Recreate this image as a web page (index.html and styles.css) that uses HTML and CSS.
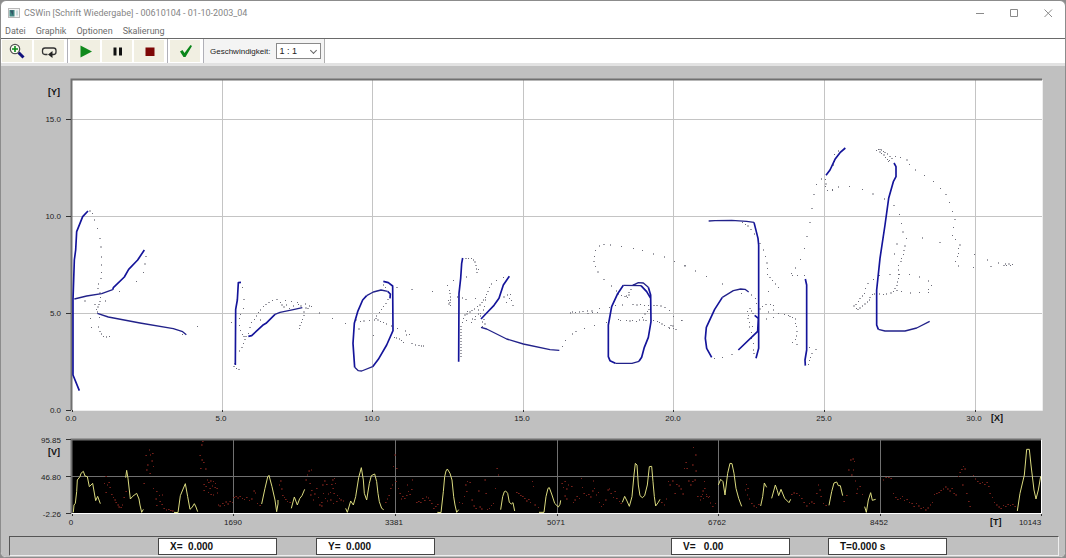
FILE: index.html
```html
<!DOCTYPE html>
<html lang="de">
<head>
<meta charset="utf-8">
<title>CSWin [Schrift Wiedergabe]</title>
<link rel="stylesheet" href="styles.css">
</head>
<body>
<div class="window">
  <header class="titlebar">
    <svg class="app-icon" viewBox="0 0 12 10" aria-hidden="true"><rect x=".5" y=".5" width="11" height="9" fill="#f4f4f4" stroke="#b9b9b9"/><rect x="1.500" y="2" width="5" height="6.500" fill="#3f8580"/><path d="M2 2.500h3v5z" fill="#356"/><rect x="8" y="2.500" width="2" height="5" fill="#c8dcdc"/></svg>
    <h1 class="title">CSWin [Schrift Wiedergabe] - 00610104 - 01-10-2003_04</h1>
    <div class="caption-buttons">
      <button class="caption-button" aria-label="Minimieren"><svg viewBox="0 0 10 10"><path d="M1 5.500h8"/></svg></button>
      <button class="caption-button" aria-label="Maximieren"><svg viewBox="0 0 10 10"><path d="M1.500 1.500h7v7h-7z"/></svg></button>
      <button class="caption-button" aria-label="Schließen"><svg viewBox="0 0 10 10"><path d="M1.500 1.500l7.500 7.500M9 1.500L1.500 9"/></svg></button>
    </div>
  </header>
  <nav class="menu">
    <button class="menu-item">Datei</button>
    <button class="menu-item">Graphik</button>
    <button class="menu-item">Optionen</button>
    <button class="menu-item">Skalierung</button>
  </nav>
  <div class="toolbar">
    <div class="tool-group">
      <button class="tool" aria-label="Vergrößern"><svg viewBox="0 0 16 16"><path d="M9.500 9.500l5 5" stroke="#10107c" stroke-width="3"/><circle cx="6" cy="6" r="4.700" fill="#fbfbf0" stroke="#555" stroke-width="1.200"/><path d="M6 3v6M3 6h6" stroke="#0b8a1a" stroke-width="1.600"/></svg></button>
      <button class="tool" aria-label="Wiederholen"><svg viewBox="0 0 16 16"><path d="M6.500 11.500H4Q1.500 11.500 1.500 9V7.500Q1.500 5 4 5h8.500Q15 5 15 7.500V9q0 2.500-2.500 2.500H9" fill="none" stroke="#333" stroke-width="1.300"/><path d="M11.500 8v7L7 11.500z" fill="#222"/></svg></button>
    </div>
    <div class="tool-group">
      <button class="tool" aria-label="Abspielen"><svg viewBox="0 0 16 16"><path d="M3.500 2.500v12L15 8.500z" fill="#108a1c"/></svg></button>
      <button class="tool" aria-label="Pause"><svg viewBox="0 0 16 16"><path d="M4.500 4.500h3v8h-3zM10 4.500h3v8h-3z" fill="#111"/></svg></button>
      <button class="tool" aria-label="Stopp"><svg viewBox="0 0 16 16"><path d="M4.500 4.500h9v8.500h-9z" fill="#7d0606"/></svg></button>
    </div>
    <div class="tool-group">
      <button class="tool" aria-label="Übernehmen"><svg viewBox="0 0 16 16"><path d="M3 8.500l2.500-1.500 2 3L13.500 2l1.500 1L8.500 14H6.500z" fill="#0a861a"/></svg></button>
    </div>
    <div class="speed">
      <label for="speed">Geschwindigkeit:</label>
      <span class="select-box"><select id="speed"><option>1 : 1</option></select></span>
    </div>
  </div>
  <main class="workspace">
    <svg class="chart" viewBox="1 66 1064 364" role="img" aria-label="Schriftverlauf Y über X">
      <defs>
        <marker id="dot" markerUnits="userSpaceOnUse" markerWidth="4" markerHeight="4" refX="2" refY="2"><rect width="4" height="4" fill="#6c6c78"/></marker>
      </defs>
      <rect x="72" y="80" width="970" height="330" fill="#fff"/>
      <path class="grid-light" d="M222.500 80v330M372.500 80v330M523.500 80v330M673.500 80v330M824.500 80v330M975.500 80v330M72 119.500h970M72 216.500h970M72 313.500h970"/>
      <path class="edge" d="M71.500 410V79.500H1042"/>
      <path d="M1042.500 80v330.500H72" fill="none" stroke="#eee"/>
      <path class="tick" d="M66 119.500h5M66 216.500h5M66 313.500h5M66 410.500h5M72.500 410v2M222.500 410v2M372.500 410v2M523.500 410v2M673.500 410v2M824.500 410v2M975.500 410v2"/>
      <g class="axis end"><text x="61" y="122">15.0</text><text x="61" y="219">10.0</text><text x="61" y="316">5.0</text><text x="61" y="413">0.0</text></g>
      <g class="axis mid"><text x="71" y="421">0.0</text><text x="221" y="421">5.0</text><text x="372" y="421">10.0</text><text x="522" y="421">15.0</text><text x="673" y="421">20.0</text><text x="824" y="421">25.0</text><text x="974" y="421">30.0</text></g>
      <g class="axis-name"><text x="48" y="95">[Y]</text><text x="991" y="421">[X]</text></g>

      <g transform="translate(40 190) scale(.33333)">
        <polyline class="air" points="150,63 157,70 164,90 172,115 180,145 183,171 185,201 185,225 185,247 183,265 175,282 174,296 180,309 182,322 180,335 177,343 174,351 170,358 172,366 178,382 151,385 155,412 175,411 180,424 185,432 191,439 199,441 208,440 165,343 197,333 135,333 238,304 290,275 310,248 315,222 318,200 473,409 428,434"/>
        <path class="pen" d="M144 63L128 80 110 125 107 180 103 210 99 330 99 555 118 602M218 299l2-6 33-32 13-23 27-28 20-30"/>
        <path class="pen thin" d="M103 327l37-9 45-7 33-12M172 370l33 11 95 18 100 17 28 9 11 9"/>
      </g>
      <g transform="translate(220 240) scale(.33333)">
        <polyline class="air" points="68,142 72,178 70,205 62,224 58,235 34,248 59,256 62,271 67,283 78,290 85,280 90,262 95,248 103,238 110,228 115,218 122,240 122,210 130,200 138,193 147,187 158,181 171,179 182,187 186,195 192,201 196,182 200,195 208,206 214,184 220,198 232,188 236,194 243,198 256,192 258,204 268,198 275,200 264,206 220,208 252,216 252,226 248,238 245,248 240,256 239,265 298,219 337,236 377,251 72,290 75,299 70,311 66,322 58,333 45,370 42,380 50,386 57,389"/>
        <polyline class="air" points="531,142 576,148 638,154 490,135 496,143 504,179 498,190 490,199 484,209 478,218 470,228 468,236 474,240 482,245 491,248 500,252 514,258 532,265 556,273 568,283 560,285 524,292 530,294 538,297 545,302 551,308 576,311 586,315 597,316 605,318 610,318 417,267 461,286 408,240 422,244 432,243 448,242 463,240"/>
        <path class="pen" d="M63 127l-8 1-3 52-5 28-1 167M85 289l10-2 33-31 10-6 27-27M490 124l15 4 13 10 1 134-19 43-25 43-17 22M404 382l-5-72 4-60 10-35 15-35 12-13M503 154l8 8-1 13"/>
        <path class="pen thin" d="M165 223l15-6 40-8 27-6M458 380l-33 13-10-1-11-10M440 167l20-11 23-6 20 4"/>
      </g>
      <g transform="translate(430 240) scale(.33333)">
        <polyline class="air" points="8,154 108,55 115,55 124,56 130,60 135,66 138,76 140,87 146,89 141,98 110,111 71,122 53,136 58,152 60,161 62,171 56,181 62,180 60,188 61,197 57,192 82,171 98,174 108,178 136,176 220,112 199,121 185,132 178,143 174,155 170,163 167,172 160,180 166,180 156,188 150,195 142,200 134,207 126,212 120,216 112,215 105,225 111,222 163,200 160,210 152,220 100,235 98,247 110,241 125,248 135,239 128,237 136,230 145,222 152,228 93,260 93,269 93,278 93,287 93,296 93,305 93,314 93,323 93,332 93,341 93,350 162,238 158,246 165,252 158,260 222,171 229,188 233,165 242,163 239,175 245,182 249,197 145,210"/>
        <polyline class="air" points="765,78 733,65 704,51 671,42 638,32 610,26 574,19 542,15 522,13 509,18 497,32 494,50 492,65 497,80 504,96 522,119 544,138 559,153 566,162 574,167 585,170 592,173 597,165 590,168 597,157 603,148 422,219 428,216 436,218 448,216 459,215 472,213 486,213 474,220 487,218 503,218 508,206 538,203 557,197 578,195 609,194 621,195 632,194 643,196 655,196 672,196 681,197 693,198 705,202 718,212 731,229 756,242 565,238 572,242 590,241 600,243 608,242 619,244 629,240 638,232 645,222 652,214 657,208 640,240 648,242 671,241 683,245 689,248 696,252 703,256 717,262 723,257 729,258 731,266 738,268 719,266 397,320 407,302 427,282 438,275 463,265 493,256 529,248"/>
        <path class="pen" d="M98 54l-3 16-3 45-5 45-1 205M153 237l17-18 22-23 15-21 13-40 18-26M655 142l7 23 1 80-8 47-12 30-8 30-8 12M556 370l-16-8-5-12V255l10-55 17-37 18-27M633 137l17 18 12 20"/>
        <path class="pen thin" d="M153 262l17 5 60 30 50 15 80 17 28 2M608 136l17-8 15 1 15 13M627 364l-21 6h-50M580 136l53 1"/>
      </g>
      <g transform="translate(680 130) scale(.33333)">
        <polyline class="air" points="15,407 46,423 80,440 127,462 5,572 188,277 196,283 204,288 213,298 223,312 240,340 251,360 256,379 261,399 262,415 263,433 270,443 278,452 286,462 296,472 265,484 185,490 214,495 227,506 230,520 258,523 271,524 280,526 248,530 240,537 280,540 265,546 296,550 313,553 325,556 330,559 337,562 346,567 346,580 349,590 351,604 350,618 347,628 351,644 337,638 259,567 280,562 210,535 203,545 205,556 214,543 219,551 204,566 208,578 209,591 217,590 215,608 214,625 220,640 220,660 222,670 104,686 127,682 156,673 408,659 396,670 388,652 392,682 388,692 385,703 334,431 337,437 352,437 374,437 346,414 362,388 373,356 381,320 390,277 396,235 402,194 410,164 424,147 436,148 438,162 436,170 442,181 457,182 475,63 463,74 463,95 460,105"/>
        <path class="pen" d="M222 277l12 48 2 20v310l-8 30M127 502l-23 36-25 54-3 33 4 30 15 27M175 660l58-56 2-39-11-9M376 447l4 18v195l-5 30 1 17M496 54l-16 14-15 20-15 32-12 16"/>
        <path class="pen thin" d="M86 273l19-1 50-1 45 3 22 3M206 486l-11-8-13-1-22 5-33 20"/>
      </g>
      <g transform="translate(830 130) scale(.33333)">
        <polyline class="air" points="140,62 146,59 150,58 155,60 160,64 155,70 150,66 162,75 167,82 172,88 175,95 165,67 172,72 180,79 186,86 178,92 197,79 212,83 231,90 239,103 257,120 284,137 311,155 331,176 348,194 358,217 367,244 375,268 370,293 367,316 376,328 390,345 385,356 385,370 382,380 376,394 385,408 431,412 433,374 473,390 483,410 505,399 522,407 527,402 530,406 537,402 541,406 547,403 278,324 330,338"/>
        <polyline class="air" points="8,178 26,171 59,169 97,178 129,192 163,207 192,227 208,254 214,280 219,306 230,325 225,348 222,362 221,374 215,386 213,395 201,342 194,372 205,407 206,420 205,434 206,446 202,456 201,466 195,476 201,482 190,484 183,489 170,492 160,493 148,492 134,492 127,493 120,502 118,510 112,516 105,522 98,528 90,534 84,539 79,536 72,528 78,524 85,515 90,506 98,498 103,490 107,475 114,461 131,448 148,437 180,434 208,434 239,434 268,441 295,453 304,466 295,479 296,487 268,487 241,489 214,485"/>
        <path class="pen" d="M192 99l6 11v30l-8 15-14 50-11 80-15 100-10 95v105l5 13"/>
        <path class="pen thin" d="M145 598l20 5h60l35-9 39-20"/>
      </g>
    </svg>
    <svg class="chart" viewBox="1 430 1064 106" role="img" aria-label="Geschwindigkeit V über Zeit T">
      <defs>
        <marker id="red" markerUnits="userSpaceOnUse" markerWidth="5" markerHeight="4" refX="2" refY="2"><rect width="5" height="4" fill="#74201a"/></marker>
      </defs>
      <rect x="72" y="440" width="969" height="73"/>
      <path class="grid-dark" d="M233.500 440v73M395.500 440v73M557.500 440v73M718.500 440v73M880.500 440v73M72 476.500h969"/>
      <path class="edge" d="M71.500 513V439.500H1041"/>
      <path d="M1041.500 440v73.500H72" fill="none" stroke="#fff"/>
      <path class="tick" d="M66 439.500h5M66 476.500h5M66 513.500h5M72.500 514v2M233.500 514v2M395.500 514v2M557.500 514v2M718.500 514v2M880.500 514v2M1041.500 514v2"/>
      <g class="axis end"><text x="61" y="443">95.85</text><text x="61" y="480">46.80</text><text x="61" y="517">-2.26</text></g>
      <g class="axis mid"><text x="71" y="525">0</text><text x="233" y="525">1690</text><text x="394" y="525">3381</text><text x="556" y="525">5071</text><text x="717" y="525">6762</text><text x="879" y="525">8452</text><text x="1030" y="525">10143</text></g>
      <g class="axis-name"><text x="48" y="455">[V]</text><text x="990" y="525">[T]</text></g>

      <g transform="translate(0 425) scale(.33333)">
        <polyline class="pause" points="318,155 313,175 322,180 327,172 318,202 330,188 335,208 340,218 345,225 348,233 354,240 357,246 363,247 367,240 372,217 378,200 438,92 443,120 448,75 451,90 458,85 456,108 460,125 440,135 450,145 432,175 460,190 470,200 478,212 468,222 487,210 480,230 470,242 486,238 492,250 499,255 506,253 512,256 518,258 600,92 605,60 608,50 606,105 611,112 617,132 602,130 622,165 618,184 612,178 626,173 632,168 640,170 646,176 630,190 637,183 645,187 651,190 625,202 633,208 640,210 652,204 612,196 655,240 660,243 668,236 673,241 678,231 684,237 690,229 697,233 702,217 708,215 714,219 720,215 727,221 733,224 740,218 748,226 755,222 762,198 766,204 772,235 780,242"/>
        <polyline class="pause" points="842,168 838,180 845,192 848,212 853,218 857,224 862,230 870,233 918,165 922,150 927,138 934,135 930,175 935,197 932,210 940,225 944,207 950,190 955,218 959,240 965,232 968,180 974,168 980,178 985,207 976,220 982,228 992,225 998,165 1003,160 1006,176 999,190 991,202 1002,206 1012,212 1018,220 1010,230 1023,225 1030,228 965,243 1000,235 970,205 995,178"/>
        <path class="speed-line" d="M220 262l2-22 4-5 4-35 2-35 8-10 3-10 7-6 5 14 7 2 6 30 10-10 9 52 6-13 8 22M377 158l3-22 4 24 7 62 7-8 12-9 7 17 3 18 5 22 5-9M522 262l12 1 7-51 7-17 8-19 7 39 7 38 7-7 6-10 5 10 5 14M785 237l10-47 8-34 4-5 9 34 9 40 5 35 4-23v-12M874 250l9-34 9 24 7-19 7-9 8-19"/>
      </g>
      <g transform="translate(350 425) scale(.33333)">
        <polyline class="pause" points="107,233 112,222 117,212 122,190 127,180 130,125 135,90 140,130 138,170 145,190 154,222 158,214 164,220 170,211 175,200 180,208 185,194 172,180 187,165 150,205 200,233 206,229 212,232 218,220 224,226 229,216 235,219 239,226 245,236 251,250 257,245 263,238 328,232 337,236 343,215 347,180 352,170 360,172 350,200 366,225 372,243 378,250 386,198 390,246 395,252 405,165 408,205 412,254 418,250 424,242 430,235 441,130 445,150 436,190 500,202 506,205 512,211 518,214 524,221 530,228 536,224 541,233 547,170 550,185 555,240 565,248"/>
        <polyline class="pause" points="636,175 640,188 645,170 650,192 655,180 645,213 650,222 665,185 670,232 675,225 681,215 688,220 694,160 697,188 702,205 709,212 716,208 722,216 728,198 733,190 739,210 730,168 745,202 748,232 754,245 760,238 767,225 774,195 778,192 783,205 790,218 795,200 800,220 808,230 813,236 935,232 943,240 949,222 955,170 960,180 968,168 975,205 980,178 987,183 993,192 999,207 1003,130 1008,112 1011,130 1016,168 1022,180 1028,170 1035,165 1030,68 1037,90 1028,120 1038,138 1043,215 1051,225 1057,208 1063,170 1060,220 1070,214 1078,215"/>
        <path class="speed-line" d="M-13 250l5 12 10-34 8 12 7-25 9-57 8-30 6 37 3 40 7 20 8-50 6-23 10-5 6 23 4 35 4 25 7 20 6 4M262 262l11 1 7-63 4-45 4-17 4-6 8 13 6 20 5 50 4 25 5 22 6-8M452 254l6-39 5-15 4-2 6 7 5 27 6 5 5-4 5 25M567 262h15l6-47 6-25 4-2 8 22 8 25 11 11 5-8 2-12M817 232l7-18 7 14 7 16 8-29 6-65 4-35 5 5 4 60 5 32 7 6 7-6 8-32 6-55 7-1 4 46 4 45 4 28 8-11 5-9"/>
      </g>
      <g transform="translate(700 425) scale(.33333)">
        <polyline class="pause" points="3,215 9,198 14,190 19,208 25,218 31,234 38,245 46,236 139,178 136,195 144,190 142,210 148,222 155,235 162,243 169,248 176,238 275,208 282,204 290,206 298,212 305,220 312,232 320,243 328,235 335,231 342,235 350,205 355,180 360,195 363,215 370,235 378,242 432,230 440,212 446,135 452,105 459,102 463,110 455,150 460,135 466,168 472,192 480,185 487,208 470,205 550,165 558,158 566,157 573,160 580,205 587,218 593,224 601,220 607,215 613,226 621,224 628,232 636,236 642,245 649,235 656,243 663,250 670,247 677,255 684,249 691,240 697,232 703,209 710,206 717,203 723,197 730,192 737,186 743,192 750,198 756,190 762,205 768,210 775,155 780,142 785,133 790,125 795,132 788,180 800,205 806,230 810,245 820,152 826,162 833,170 840,176 847,172 854,178 861,172 866,185 870,205 877,218 883,232 890,240 897,246 903,250 910,241 917,245 924,239 931,242 938,238 945,244"/>
        <path class="speed-line" d="M55 180l7-17 7 7 6 40 8-65 7-30 6 1 6 29 6 45 8 30 9 24M182 243l6-28 5-41 7 13M215 220l11-40 6 17 4 15 7-19 11 27 13 13 5-10M387 241l8-41 7-26 8-3 5 11h6l7 30M494 245l5 17 6-37 7-22 5 23 10-3M952 258l8-53 13-55 7-77h8l5 47 9 75 6 27 7-27 7-41"/>
      </g>
    </svg>
    <footer class="status">
      <output class="field field-x">X=&nbsp; 0.000</output>
      <output class="field field-y">Y=&nbsp; 0.000</output>
      <output class="field field-v">V=&nbsp;&nbsp; 0.00</output>
      <output class="field field-t">T=0.000 s</output>
    </footer>
  </main>
</div>
</body>
</html>
```
FILE: styles.css
```css
* { box-sizing: border-box; }

body {
  margin: 0;
  background: #8c8c8c;
  font-family: "Liberation Sans", Arial, sans-serif;
}

button {
  padding: 0;
  border: 0;
  background: none;
  font: inherit;
  color: inherit;
}

.window {
  display: flex;
  flex-direction: column;
  min-height: 100vh;
  overflow: hidden;
  border: 1px solid #8c8c8c;
  border-radius: 6px;
  background: #fff;
}

.titlebar {
  display: flex;
  align-items: center;
  height: 23px;
  padding: 0 7px;
  gap: 4px;
  color: #858585;
}

.app-icon { width: 12px; height: 10px; }

.title {
  flex: 1;
  margin: 0;
  font: 9px/12px Roboto, "Noto Sans", sans-serif;
}

.caption-buttons { display: flex; gap: 14px; }

.caption-button {
  display: grid;
  place-items: center;
  width: 20px;
  height: 20px;
}

.caption-button svg {
  width: 10px;
  height: 10px;
  fill: none;
  stroke: #8a8a8a;
}

.menu {
  display: flex;
  gap: 10px;
  height: 15px;
  padding: 0 4px;
  border-bottom: 1px solid #6a6a6a;
  font: 9px/12px Roboto, "Noto Sans", sans-serif;
  color: #6c6c6c;
}

.toolbar {
  display: flex;
  height: 27px;
  padding-left: 1px;
  border-bottom: 3px solid #e2e2e2;
}

.tool-group {
  display: flex;
  gap: 2px;
  padding: 1px 3px 1px 0;
  margin-right: 2px;
  border-right: 1px solid #b0b0b8;
}

.tool {
  display: grid;
  place-items: center;
  width: 30px;
  background: #f1efe2;
}

.tool svg { width: 16px; height: 16px; }

.tool-group:nth-child(3) { margin-right: 0; }

.speed {
  display: flex;
  align-items: center;
  gap: 6px;
  padding: 0 3px 0 6px;
  border-right: 1px solid #b0b0b0;
  background: #f4f4f4;
  font-size: 8px;
  color: #222;
}

.select-box { position: relative; }

.select-box::after {
  content: "";
  position: absolute;
  top: 5px;
  right: 5px;
  width: 4px;
  height: 4px;
  border: solid #666;
  border-width: 0 1px 1px 0;
  transform: rotate(45deg);
  pointer-events: none;
}

.select-box select {
  display: block;
  appearance: none;
  width: 45px;
  height: 16px;
  padding: 0 2px;
  border: 1px solid #8a8a8a;
  border-radius: 0;
  background: #fff;
  font: 9px "Liberation Sans", Arial, sans-serif;
  color: #222;
}

.workspace {
  flex: 1;
  background: #c0c0c0;
}

.chart { display: block; width: 100%; }

.axis { font-size: 8px; fill: #222; }
.end { text-anchor: end; }
.mid { text-anchor: middle; }
.axis-name { font-size: 9px; font-weight: bold; fill: #111; }

.grid-light { fill: none; stroke: #c4c4c4; }
.grid-dark { fill: none; stroke: #707070; }
.edge { fill: none; stroke: #707070; stroke-width: 2; }
.tick { stroke: #333; }

.pen { fill: none; stroke: #14149a; stroke-width: 5; stroke-linejoin: round; }
.pen.thin { stroke: #22228a; stroke-width: 4; }
.air { fill: none; marker: url(#dot); }
.pause { fill: none; marker: url(#red); }
.speed-line { fill: none; stroke: #dcdc80; stroke-width: 3; }

.status {
  display: grid;
  grid-template-columns: 148fr 119fr 39fr 119fr 236fr 119fr 38fr 119fr 111fr;
  margin: 0 6px 1px 8px;
  padding-top: 1px;
  border: 1px solid #555;
  border-right-color: #eee;
  border-bottom-color: #eee;
}

.field {
  height: 17px;
  padding-left: 11px;
  border: 1px solid #444;
  background: #fff;
  font-size: 10px;
  font-weight: bold;
  line-height: 16px;
  white-space: nowrap;
  color: #111;
}

.field-x { grid-column: 2; }
.field-y { grid-column: 4; }
.field-v { grid-column: 6; }
.field-t { grid-column: 8; }
```
